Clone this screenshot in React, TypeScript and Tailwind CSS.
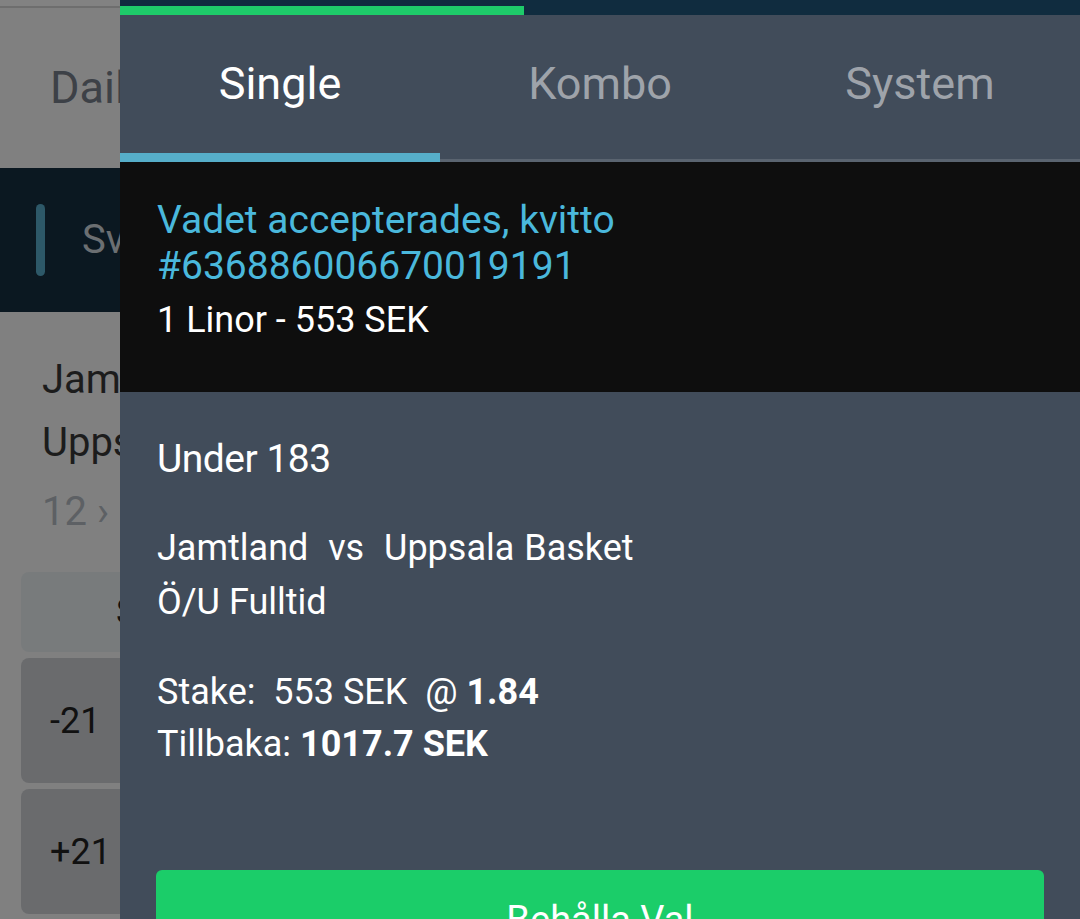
import React from "react";

const font = { fontFamily: "Roboto, 'Noto Sans', Arial, sans-serif" };

function BackgroundPage() {
  return (
    <div className="w-[1080px] h-full bg-[#808080]">
      <div className="h-[6px] bg-[#828282]" />
      <div className="h-[2px] bg-[#6e6e6e]" />
      <div className="h-[160px] flex items-center pl-[50px]">
        <span className="text-[45px] text-[#3d4147]">Daily Odds</span>
      </div>
      <div className="h-[144px] bg-[#0b1821] flex items-center pl-[36px]">
        <div className="w-[9px] h-[72px] rounded-full bg-[#2d5868]" />
        <span className="ml-[37px] text-[40px] text-[#6b6f72]">Sverige</span>
      </div>
      <div className="pl-[42px] pt-[36px] text-[40px] leading-[63px] text-[#1c1c1c]">
        <div>Jamtland</div>
        <div>Uppsala Basket</div>
        <div className="mt-[6px] text-[#5d6064]">12 › Basketligan</div>
      </div>
      <div className="pl-[21px] pt-[29px] flex flex-col gap-[6px]">
        <div className="h-[80px] w-[400px] rounded-lg bg-[#787b7c] flex items-center pl-[95px] text-[36px] text-[#111]">
          S
        </div>
        <div className="h-[125px] w-[400px] rounded-lg bg-[#6a6b6d] flex items-center pl-[29px] text-[36px] text-[#111]">
          -21
        </div>
        <div className="h-[125px] w-[400px] rounded-lg bg-[#6a6b6d] flex items-center pl-[29px] text-[36px] text-[#111]">
          +21
        </div>
      </div>
    </div>
  );
}

function Tabs() {
  const tabs = ["Single", "Kombo", "System"];
  return (
    <div className="shrink-0 bg-[#414c5a]">
      <div className="h-[138px] grid grid-cols-3">
        {tabs.map((t, i) => (
          <div
            key={t}
            className={`flex items-center justify-center text-[45px] ${
              i === 0 ? "text-white" : "text-[#9ea3aa]"
            }`}
          >
            {t}
          </div>
        ))}
      </div>
      <div className="h-[9px] flex items-end">
        <div className="w-[320px] h-[9px] bg-[#56aec9]" />
        <div className="flex-1 h-[3px] bg-[#5a6470]" />
      </div>
    </div>
  );
}

function BetSlip() {
  return (
    <div className="w-[960px] h-full flex flex-col bg-[#414c5a]">
      <div className="shrink-0 h-[15px] bg-[#102c3f] flex items-end">
        <div className="w-[404px] h-[9px] bg-[#1ecb6a]" />
      </div>
      <Tabs />
      <div className="shrink-0 h-[230px] bg-[#0e0e0e] pl-[37px] pt-[35px] text-[39px] leading-[46px]">
        <div className="text-[#4ab8dc]">Vadet accepterades, kvitto</div>
        <div className="text-[#4ab8dc]">#636886006670019191</div>
        <div className="mt-[8px] text-[36px] text-white">1 Linor - 553 SEK</div>
      </div>
      <div className="shrink-0 pl-[37px] pr-[36px] pt-[44px] text-white text-[36px]">
        <div className="text-[39px] leading-[46px] tracking-[-0.5px]">Under 183</div>
        <div className="mt-[39px] leading-[54px] whitespace-pre">
          <div className="[word-spacing:1px]">{"Jamtland  vs  Uppsala Basket"}</div>
          <div>Ö/U Fulltid</div>
        </div>
        <div className="mt-[37px] leading-[52px] whitespace-pre">
          <div>
            Stake:  553 SEK  @ <span className="font-bold">1.84</span>
          </div>
          <div>
            Tillbaka: <span className="font-bold">1017.7 SEK</span>
          </div>
        </div>
        <button className="mt-[100px] -ml-px w-[888px] h-[100px] rounded-md bg-[#1bcd69] text-white text-[38px] flex items-center justify-center">
          Behålla Val
        </button>
      </div>
    </div>
  );
}

export default function App() {
  return (
    <div className="w-[1080px] h-[919px] overflow-hidden flex" style={font}>
      <div className="w-[120px] h-full overflow-hidden shrink-0">
        <BackgroundPage />
      </div>
      <BetSlip />
    </div>
  );
}
